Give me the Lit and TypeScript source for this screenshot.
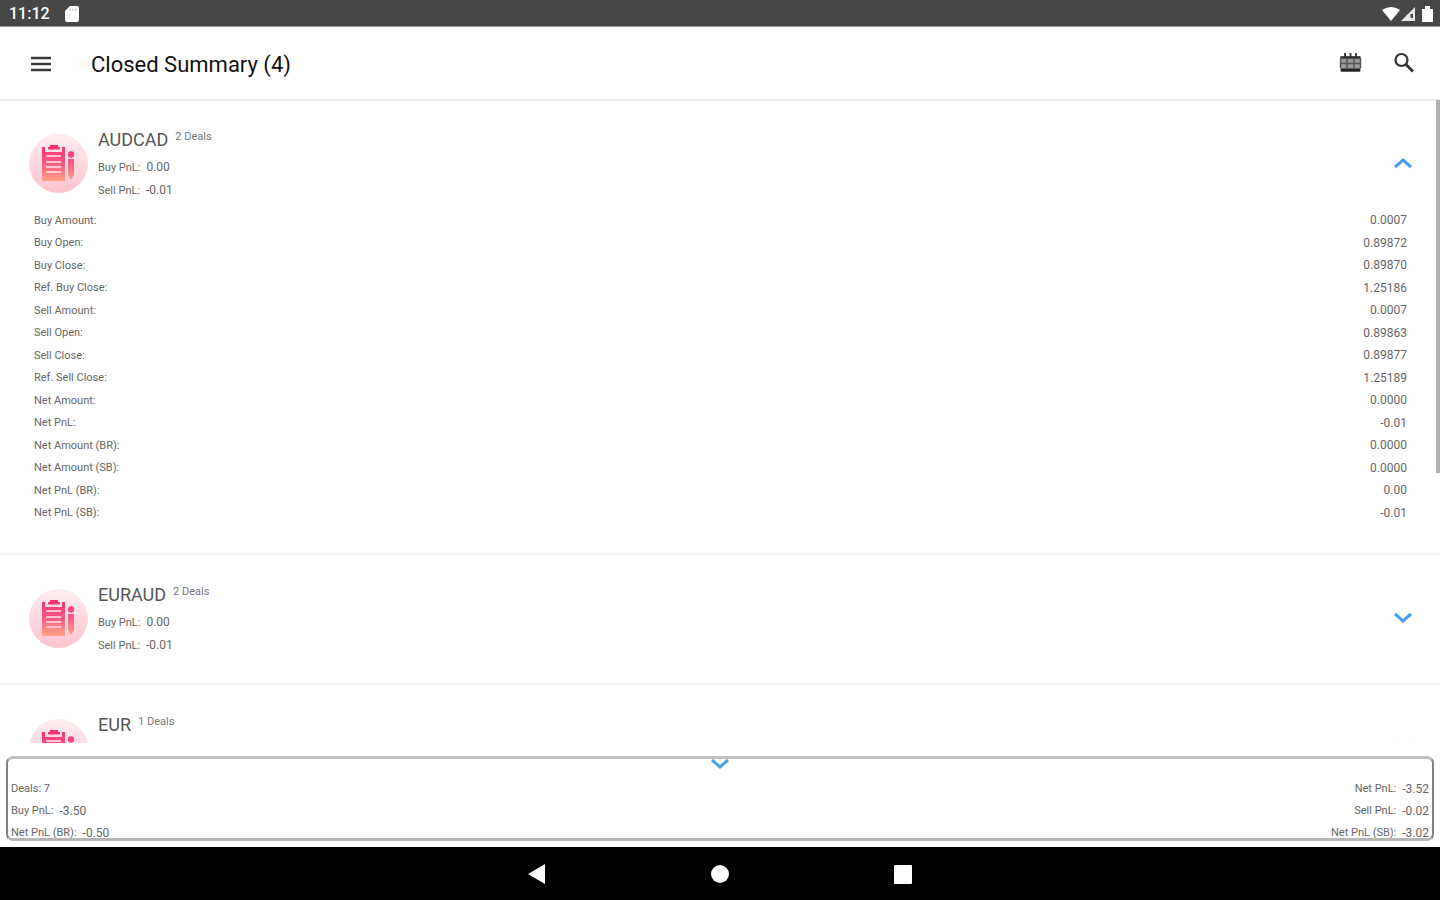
import { LitElement, html, css, svg } from "lit";
import { customElement, property, state } from "lit/decorators.js";

interface Deal {
  symbol: string;
  deals: number;
  buy: string;
  sell: string;
  open: boolean;
}

const DETAILS: [string, string][] = [
  ["Buy Amount:", "0.0007"],
  ["Buy Open:", "0.89872"],
  ["Buy Close:", "0.89870"],
  ["Ref. Buy Close:", "1.25186"],
  ["Sell Amount:", "0.0007"],
  ["Sell Open:", "0.89863"],
  ["Sell Close:", "0.89877"],
  ["Ref. Sell Close:", "1.25189"],
  ["Net Amount:", "0.0000"],
  ["Net PnL:", "-0.01"],
  ["Net Amount (BR):", "0.0000"],
  ["Net Amount (SB):", "0.0000"],
  ["Net PnL (BR):", "0.00"],
  ["Net PnL (SB):", "-0.01"],
];

const chevron = (up: boolean) => html`<svg width="20" height="12" viewBox="0 0 20 12" aria-hidden="true">
  <path d=${up ? "M2 10 L10 3 L18 10" : "M2 2 L10 9 L18 2"} fill="none" stroke="#4a9fe8" stroke-width="3" />
</svg>`;

@customElement("deal-badge")
export class DealBadge extends LitElement {
  static styles = css`
    :host {
      display: block;
      width: 59px;
      height: 59px;
      flex: none;
    }
    svg {
      display: block;
    }
  `;

  render() {
    return html`<svg width="59" height="59" viewBox="0 0 59 59" aria-hidden="true">
      ${svg`
        <defs>
          <linearGradient id="disc" x1="0" y1="0" x2="0" y2="1">
            <stop offset="0" stop-color="#ffedf0" />
            <stop offset="1" stop-color="#ffc3cf" />
          </linearGradient>
          <linearGradient id="ink" gradientUnits="userSpaceOnUse" x1="0" y1="11" x2="0" y2="47">
            <stop offset="0" stop-color="#fb2d72" />
            <stop offset="0.45" stop-color="#f85583" />
            <stop offset="1" stop-color="#ffa184" />
          </linearGradient>
        </defs>
        <circle cx="29.500" cy="29.500" r="29.500" fill="url(#disc)" />
        <path fill="url(#ink)" d="M13 13 H16 V18 H33 V13 H36 V47 H13 Z" />
        <path fill="url(#ink)" d="M19 15.500 V13 H21 V11 H29 V13 H31 V15.500 Z" />
        <path d="M17 22 H32 M17 28 H32 M17 33 H32 M17 38 H32" stroke="#ffc6d2" stroke-width="1.800" />
        <circle cx="42" cy="20.500" r="3.200" fill="url(#ink)" />
        <path fill="url(#ink)" d="M39 25 H45 V41 L42 46 L39 41 Z" />
      `}
    </svg>`;
  }
}

@customElement("deal-card")
export class DealCard extends LitElement {
  @property({ attribute: false }) deal!: Deal;
  @state() private toggled = false;

  static styles = css`
    :host {
      display: block;
      border-bottom: 2px solid #f5f5f5;
      padding-bottom: 19px;
    }
    .head {
      display: flex;
      align-items: flex-start;
      padding: 28px 27px 0 29px;
      height: 81px;
    }
    deal-badge {
      margin-top: 6px;
    }
    .text {
      flex: 1;
      padding-left: 10px;
    }
    .title {
      display: flex;
      gap: 7px;
      margin: 0;
      font-size: 18px;
      line-height: 24px;
      font-weight: 400;
      color: #555;
    }
    .count {
      font-size: 11px;
      line-height: 18px;
      color: #777;
    }
    .line {
      display: flex;
      gap: 6px;
      margin: 0;
      padding-top: 4px;
      height: 19px;
      line-height: 23px;
    }
    .value {
      font-size: 12px;
    }
    .toggle {
      display: flex;
      align-items: center;
      justify-content: center;
      width: 20px;
      height: 20px;
      margin-top: 25px;
      padding: 0;
      border: 0;
      background: none;
    }
    .details {
      display: grid;
      grid-auto-rows: 1fr;
      height: 315px;
      margin: 0;
      padding: 0 33px 10px 34px;
    }
    .row {
      display: flex;
      align-items: center;
      justify-content: space-between;
    }
    dd {
      margin: 0;
    }
  `;

  render() {
    const open = this.deal.open !== this.toggled;
    return html`
      <div class="head">
        <deal-badge></deal-badge>
        <div class="text">
          <h2 class="title">${this.deal.symbol}<span class="count">${this.deal.deals} Deals</span></h2>
          <p class="line"><span>Buy PnL:</span><span class="value">${this.deal.buy}</span></p>
          <p class="line"><span>Sell PnL:</span><span class="value">${this.deal.sell}</span></p>
        </div>
        <button
          class="toggle"
          aria-label="Toggle ${this.deal.symbol}"
          aria-expanded=${open}
          @click=${() => (this.toggled = !this.toggled)}
        >
          ${chevron(open)}
        </button>
      </div>
      ${open
        ? html`<dl class="details">
            ${DETAILS.map(([k, v]) => html`<div class="row"><dt>${k}</dt><dd class="value">${v}</dd></div>`)}
          </dl>`
        : null}
    `;
  }
}

@customElement("app-root")
export class AppRoot extends LitElement {
  private deals: Deal[] = [
    { symbol: "AUDCAD", deals: 2, buy: "0.00", sell: "-0.01", open: true },
    { symbol: "EURAUD", deals: 2, buy: "0.00", sell: "-0.01", open: false },
    { symbol: "EUR", deals: 1, buy: "0.00", sell: "-0.01", open: false },
  ];

  private totals: [string, string, string, string][] = [
    ["Deals: 7", "", "Net PnL:", "-3.52"],
    ["Buy PnL:", "-3.50", "Sell PnL:", "-0.02"],
    ["Net PnL (BR):", "-0.50", "Net PnL (SB):", "-3.02"],
  ];

  static styles = css`
    :host {
      display: flex;
      flex-direction: column;
      height: 100vh;
      background: #fff;
      font-family: Roboto, "Liberation Sans", sans-serif;
      font-size: 11px;
      color: #666;
    }
    svg {
      display: block;
    }
    button {
      display: flex;
      align-items: center;
      justify-content: center;
      padding: 0;
      border: 0;
      background: none;
    }
    .status {
      display: flex;
      align-items: center;
      justify-content: space-between;
      flex: none;
      box-sizing: border-box;
      height: 27px;
      padding: 2px 7px 0 9px;
      background: #464646;
      border-bottom: 1px solid #999;
      color: #fff;
      font-size: 16px;
      font-weight: 500;
    }
    .group {
      display: flex;
      align-items: center;
    }
    .clock {
      margin-right: 15px;
      line-height: 24px;
    }
    .bar {
      display: flex;
      align-items: center;
      flex: none;
      box-sizing: border-box;
      height: 74px;
      padding: 2px 24px 0 29px;
      border-bottom: 2px solid #ececec;
    }
    .bar h1 {
      flex: 1;
      margin: 0;
      padding: 2px 0 0 38px;
      font-size: 22px;
      line-height: 28px;
      font-weight: 400;
      color: #111;
    }
    .actions {
      display: flex;
      gap: 30px;
      padding-bottom: 2px;
    }
    .list {
      position: relative;
      flex: 1;
      min-height: 0;
      margin: -1px 0 13px;
      overflow: hidden;
    }
    .thumb {
      position: absolute;
      top: 0;
      right: 0;
      width: 4px;
      height: 58%;
      background: #b0b0b0;
    }
    .totals {
      flex: none;
      box-sizing: border-box;
      height: 85px;
      margin: 0 6px 6px;
      padding: 0 3px;
      overflow: hidden;
      border: 2px solid #808080;
      border-top: 3px solid #c0c0c0;
      border-bottom: 3px solid #b5b5b5;
      border-radius: 7px;
    }
    .fold {
      height: 10px;
      margin: 0 auto 8px;
    }
    .sum {
      display: flex;
      justify-content: space-between;
      height: 22px;
      line-height: 24px;
    }
    .pair {
      display: flex;
      gap: 6px;
    }
    .value {
      font-size: 12px;
    }
    .nav {
      display: flex;
      align-items: center;
      justify-content: center;
      gap: 163px;
      flex: none;
      height: 53px;
      background: #000;
    }
  `;

  render() {
    return html`
      <div class="status">
        <div class="group">
          <span class="clock">11:12</span>
          <svg width="14" height="16" viewBox="0 0 14 16" aria-hidden="true">
            <path fill="#fff" d="M5 0 H12 Q14 0 14 2 V14 Q14 16 12 16 H2 Q0 16 0 14 V5 Z" />
            <path d="M5 2.500 V5 M8 2.500 V5 M11 2.500 V5" stroke="#bbb" stroke-width="1" />
          </svg>
        </div>
        <svg width="51" height="16" viewBox="0 0 51 16" aria-hidden="true">
          <path fill="#fff" d="M0 4 Q9 -2 18 4 L9 15 Z" />
          <path fill="#e8e8e8" d="M19 15 L33 1 V15 Z" />
          <path fill="#464646" d="M28.500 8 H31 V12 H28.500 Z" />
          <path fill="#fff" d="M40 3 H43 V0 H48 V3 H51 V16 H40 Z" />
        </svg>
      </div>

      <header class="bar">
        <button aria-label="Menu">
          <svg width="24" height="18" viewBox="0 0 24 18">
            <path d="M2 3 H22 M2 9 H22 M2 15 H22" stroke="#3a3a3a" stroke-width="2.400" />
          </svg>
        </button>
        <h1>Closed Summary (4)</h1>
        <div class="actions">
          <button aria-label="Calendar">
            <svg width="24" height="22" viewBox="0 0 24 22">
              <path fill="#999" d="M2 4 H23 V18 Q23 20 21 20 H4 Q2 20 2 18 Z" />
              <path d="M7 1 V6 M12.500 1 V6 M18 1 V6" stroke="#444" stroke-width="2" />
              <path d="M3 5.500 H22" stroke="#333" stroke-width="2.500" />
              <path d="M2.500 6 V16 M9 7 V16 M16 7 V16 M22.500 6 V16 M3 11.500 H22" stroke="#555" stroke-width="1.400" />
              <path d="M3 18 H22" stroke="#222" stroke-width="3" />
            </svg>
          </button>
          <button aria-label="Search">
            <svg width="24" height="22" viewBox="0 0 24 22">
              <circle cx="9.500" cy="8" r="6" fill="none" stroke="#333" stroke-width="2.200" />
              <path d="M14 12.500 L21 19.500" stroke="#333" stroke-width="2.800" />
            </svg>
          </button>
        </div>
      </header>

      <main class="list">
        ${this.deals.map((d) => html`<deal-card .deal=${d}></deal-card>`)}
        <div class="thumb"></div>
      </main>

      <section class="totals">
        <button class="fold" aria-label="Collapse totals">${chevron(false)}</button>
        ${this.totals.map(
          ([a, b, c, d]) => html`<div class="sum">
            <div class="pair"><span>${a}</span><span class="value">${b}</span></div>
            <div class="pair"><span>${c}</span><span class="value">${d}</span></div>
          </div>`
        )}
      </section>

      <nav class="nav">
        <button aria-label="Back">
          <svg width="20" height="22" viewBox="0 0 20 22"><path fill="#fff" d="M1 11 L18 1 V21 Z" /></svg>
        </button>
        <button aria-label="Home">
          <svg width="20" height="22" viewBox="0 0 20 22"><circle cx="10" cy="11" r="9" fill="#fff" /></svg>
        </button>
        <button aria-label="Recent apps">
          <svg width="20" height="22" viewBox="0 0 20 22">
            <rect x="1" y="2" width="18" height="19" rx="1" fill="#fff" />
          </svg>
        </button>
      </nav>
    `;
  }
}
